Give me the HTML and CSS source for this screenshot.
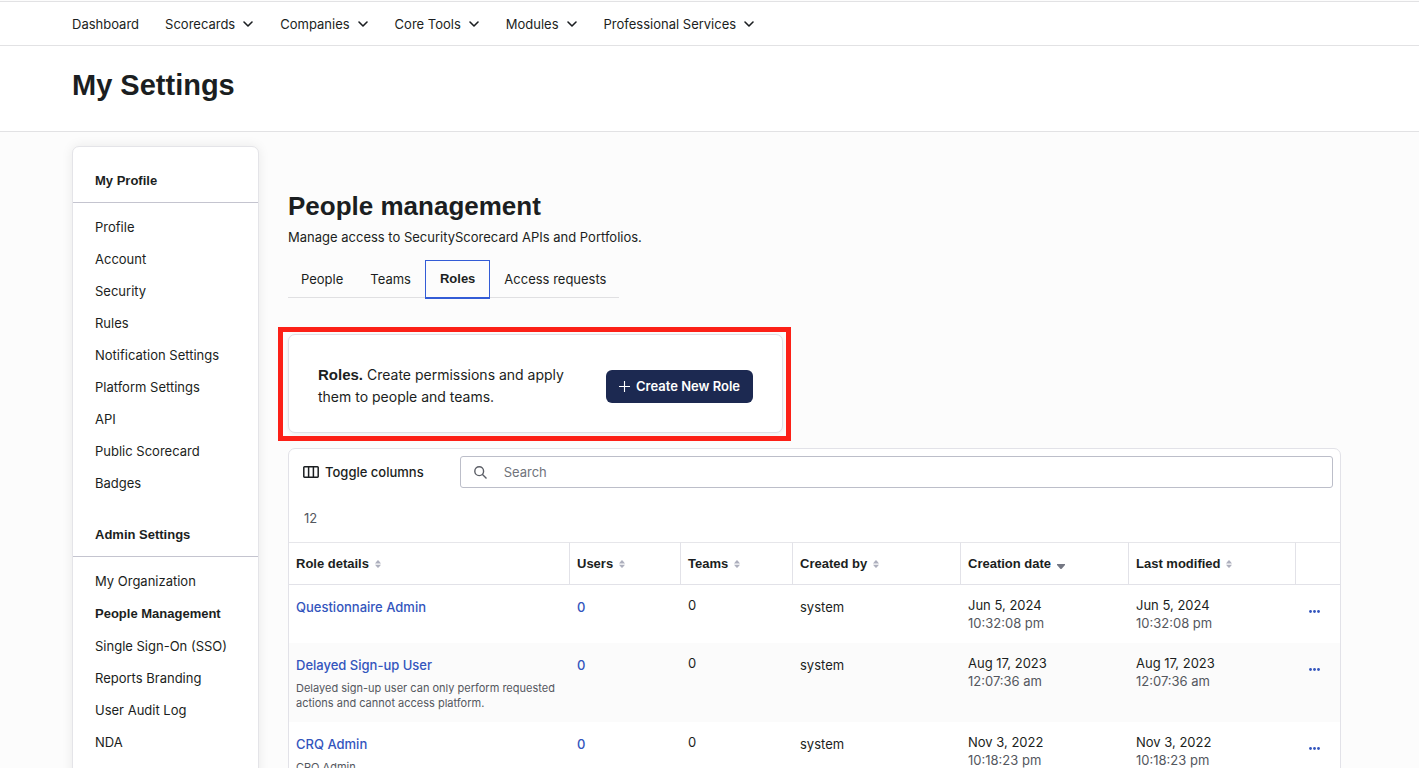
FILE: index.html
```html
<!DOCTYPE html>
<html lang="en">
<head>
    <meta charset="utf-8">
    <title>My Settings</title>
    <link rel="stylesheet" href="styles.css">
</head>
<body>
    <!-- shared icons -->
    <svg class="sprite" aria-hidden="true">
        <symbol id="chevron" viewBox="0 0 12 8"><path d="M2 2l4 4 4-4" fill="none" stroke="currentColor" stroke-width="1.6" stroke-linecap="round" stroke-linejoin="round"/></symbol>
        <symbol id="sort" viewBox="0 0 6 8"><path d="M0 3.400L2.400.5Q3 0 3.600.5L6 3.400zM0 4.800h6L3.600 7.600Q3 8 2.400 7.600z" fill="currentColor"/></symbol>
        <symbol id="dots" viewBox="0 0 11 3"><circle cx="1.5" cy="1.5" r="1.4"/><circle cx="5.5" cy="1.5" r="1.4"/><circle cx="9.5" cy="1.5" r="1.4"/></symbol>
    </svg>

    <nav class="top-nav">
        <a href="#">Dashboard</a>
        <button>Scorecards <svg class="chevron"><use href="#chevron"/></svg></button>
        <button>Companies <svg class="chevron"><use href="#chevron"/></svg></button>
        <button>Core Tools <svg class="chevron"><use href="#chevron"/></svg></button>
        <button>Modules <svg class="chevron"><use href="#chevron"/></svg></button>
        <button>Professional Services <svg class="chevron"><use href="#chevron"/></svg></button>
    </nav>

    <header class="page-header">
        <h1>My Settings</h1>
    </header>

    <div class="content">
        <aside class="sidebar">
            <h3>My Profile</h3>
            <ul>
                <li><a href="#">Profile</a></li>
                <li><a href="#">Account</a></li>
                <li><a href="#">Security</a></li>
                <li><a href="#">Rules</a></li>
                <li><a href="#">Notification Settings</a></li>
                <li><a href="#">Platform Settings</a></li>
                <li><a href="#">API</a></li>
                <li><a href="#">Public Scorecard</a></li>
                <li><a href="#">Badges</a></li>
            </ul>
            <h3>Admin Settings</h3>
            <ul>
                <li><a href="#">My Organization</a></li>
                <li><a href="#" class="active">People Management</a></li>
                <li><a href="#">Single Sign-On (SSO)</a></li>
                <li><a href="#">Reports Branding</a></li>
                <li><a href="#">User Audit Log</a></li>
                <li><a href="#">NDA</a></li>
            </ul>
        </aside>

        <main>
            <h2>People management</h2>
            <p class="intro">Manage access to SecurityScorecard APIs and Portfolios.</p>

            <div class="tabs" role="tablist">
                <button role="tab">People</button>
                <button role="tab">Teams</button>
                <button role="tab" class="selected" aria-selected="true">Roles</button>
                <button role="tab">Access requests</button>
            </div>

            <section class="roles-card">
                <p><strong>Roles.</strong> Create permissions and apply them to people and teams.</p>
                <button class="create-button">
                    <svg class="plus" viewBox="0 0 11 11"><path d="M5.5 0v11M0 5.5h11" stroke="currentColor" stroke-width="1.1"/></svg>
                    Create New Role
                </button>
            </section>

            <section class="table-card">
                <div class="toolbar">
                    <button class="toggle-columns">
                        <svg class="columns" viewBox="0 0 16 12"><path d="M1.5.8h13a.7.7 0 0 1 .7.7v9a.7.7 0 0 1-.7.7h-13a.7.7 0 0 1-.7-.7v-9a.7.7 0 0 1 .7-.7zM5.6 1v10M10.4 1v10" fill="none" stroke="currentColor" stroke-width="1.5"/></svg>
                        Toggle columns
                    </button>
                    <label class="search">
                        <svg viewBox="0 0 13 13"><path d="M9.6 5.2a4.4 4.4 0 1 1-8.8 0 4.4 4.4 0 0 1 8.8 0zM8.5 8.5l4 4" fill="none" stroke="currentColor" stroke-width="1.4"/></svg>
                        <input type="text" placeholder="Search" aria-label="Search">
                    </label>
                </div>
                <p class="count">12</p>

                <table>
                    <colgroup>
                        <col>
                        <col class="col-users">
                        <col class="col-teams">
                        <col class="col-wide">
                        <col class="col-wide">
                        <col class="col-modified">
                        <col class="col-menu">
                    </colgroup>
                    <thead>
                        <tr>
                            <th>Role details <svg class="sort"><use href="#sort"/></svg></th>
                            <th>Users <svg class="sort"><use href="#sort"/></svg></th>
                            <th>Teams <svg class="sort"><use href="#sort"/></svg></th>
                            <th>Created by <svg class="sort"><use href="#sort"/></svg></th>
                            <th>Creation date <svg class="sorted" viewBox="0 0 8 5"><path d="M0 0h8v1L4.700 4.700Q4 5.200 3.300 4.700L0 1z" fill="currentColor"/></svg></th>
                            <th>Last modified <svg class="sort"><use href="#sort"/></svg></th>
                            <th></th>
                        </tr>
                    </thead>
                    <tbody>
                        <tr>
                            <td><a href="#">Questionnaire Admin</a></td>
                            <td><a href="#">0</a></td>
                            <td>0</td>
                            <td class="creator">system</td>
                            <td>Jun 5, 2024<span class="time">10:32:08 pm</span></td>
                            <td>Jun 5, 2024<span class="time">10:32:08 pm</span></td>
                            <td><button class="menu" aria-label="More actions"><svg><use href="#dots"/></svg></button></td>
                        </tr>
                        <tr>
                            <td><a href="#">Delayed Sign-up User</a><p class="description">Delayed sign-up user can only perform requested actions and cannot access platform.</p></td>
                            <td><a href="#">0</a></td>
                            <td>0</td>
                            <td class="creator">system</td>
                            <td>Aug 17, 2023<span class="time">12:07:36 am</span></td>
                            <td>Aug 17, 2023<span class="time">12:07:36 am</span></td>
                            <td><button class="menu" aria-label="More actions"><svg><use href="#dots"/></svg></button></td>
                        </tr>
                        <tr>
                            <td><a href="#">CRQ Admin</a><p class="description">CRQ Admin</p></td>
                            <td><a href="#">0</a></td>
                            <td>0</td>
                            <td class="creator">system</td>
                            <td>Nov 3, 2022<span class="time">10:18:23 pm</span></td>
                            <td>Nov 3, 2022<span class="time">10:18:23 pm</span></td>
                            <td><button class="menu" aria-label="More actions"><svg><use href="#dots"/></svg></button></td>
                        </tr>
                    </tbody>
                </table>
            </section>
        </main>
    </div>
</body>
</html>
```
FILE: styles.css
```css
* {
    box-sizing: border-box;
}

body {
    margin: 0;
    padding-top: 1px;
    height: 100vh;
    overflow: hidden;
    background-color: #fcfcfc;
    color: #1b1e21;
    font-family: Inter, sans-serif;
    font-size: 13px;
    line-height: 18px;
}

h1, h2, h3, p, ul {
    margin: 0;
    padding: 0;
}

h1, h2, h3, th, strong {
    font-family: "Liberation Sans", Arial, sans-serif;
    font-weight: bold;
}

button {
    padding: 0;
    border: none;
    background: none;
    color: inherit;
    font: inherit;
    cursor: pointer;
}

a {
    color: inherit;
    text-decoration: none;
}

svg {
    flex: none;
}

.sprite {
    display: none;
}

.top-nav {
    display: flex;
    align-items: center;
    gap: 26px;
    height: 45px;
    padding: 0 72px;
    background-color: #fff;
    border-top: 1px solid #e2e2e4;
    border-bottom: 1px solid #e2e2e4;
}

.top-nav button {
    display: flex;
    align-items: center;
    gap: 7px;
}

.chevron {
    width: 12px;
    height: 8px;
}

.page-header {
    padding: 22px 72px 29px;
    background-color: #fff;
    border-bottom: 1px solid #e2e2e4;
}

h1 {
    font-size: 29px;
    line-height: 34px;
}

.content {
    display: flex;
    align-items: flex-start;
    gap: 29px;
    padding: 14px 78px 0 72px;
}

.sidebar {
    flex: none;
    width: 187px;
    padding: 15px 0 48px;
    background-color: #fff;
    border: 1px solid #e4e4e8;
    border-radius: 7px;
    box-shadow: 0 0 12px rgba(0, 0, 0, 0.08);
}

h3 {
    padding: 10px 22px 12px;
    border-bottom: 1px solid #c4c4cf;
    font-size: 13px;
    line-height: 18px;
}

.sidebar ul {
    list-style: none;
    padding: 8px 22px 17px;
}

.sidebar li {
    line-height: 32px;
}

.sidebar .active {
    font-family: "Liberation Sans", Arial, sans-serif;
    font-weight: bold;
}

main {
    flex: 1;
    min-width: 0;
    padding-top: 44px;
}

h2 {
    font-size: 26px;
    line-height: 32px;
}

.intro {
    padding: 6px 0 14px;
}

.tabs {
    display: flex;
    width: fit-content;
    gap: 1px;
    border-bottom: 1px solid #e0e0e2;
}

.tabs button {
    height: 37px;
    padding: 0 12px;
    border: 1px solid transparent;
}

.tabs .selected {
    margin-bottom: -2px;
    height: 39px;
    padding: 0 14px;
    border-color: #335cd6;
    border-bottom-width: 2px;
    font-family: "Liberation Sans", Arial, sans-serif;
    font-weight: bold;
}

.roles-card {
    position: relative;
    display: flex;
    align-items: center;
    justify-content: space-between;
    width: 495px;
    margin-top: 36px;
    padding: 29px 29px 24px;
    background-color: #fff;
    border: 1px solid #e0e0e6;
    border-radius: 7px;
    box-shadow: 0 1px 4px rgba(0, 0, 0, 0.06);
}

/* red callout around the card */
.roles-card::after {
    content: "";
    position: absolute;
    inset: -8px -9px -9px -11px;
    border: 5px solid #fc2017;
    pointer-events: none;
}

.roles-card p {
    width: 264px;
    font-size: 14px;
    line-height: 22px;
}

.roles-card strong {
    font-size: 15px;
}

.create-button {
    display: flex;
    align-items: center;
    gap: 6px;
    height: 33px;
    padding: 0 13px;
    background-color: #1c2951;
    border-radius: 6px;
    color: #fff;
    font-weight: 600;
}

.plus {
    width: 11px;
    height: 11px;
}

.table-card {
    margin-top: 15px;
    background-color: #fff;
    border: 1px solid #e2e2e8;
    border-radius: 7px;
}

.toolbar {
    display: flex;
    align-items: center;
    gap: 36px;
    padding: 7px 7px 0 14px;
}

.toggle-columns {
    display: flex;
    align-items: center;
    gap: 6px;
    font-weight: 500;
}

.columns {
    width: 16px;
    height: 12px;
}

.search {
    display: flex;
    flex: 1;
    align-items: center;
    gap: 17px;
    height: 32px;
    padding: 0 13px;
    border: 1px solid #bcbec9;
    border-radius: 3px;
    color: #5b5e66;
}

.search svg {
    width: 13px;
    height: 13px;
}

.search input {
    flex: 1;
    padding: 0;
    border: none;
    outline: none;
    background: none;
    font: inherit;
}

.search input::placeholder {
    color: #70737b;
}

.count {
    padding: 21px 15px 15px;
    color: #54575e;
}

table {
    width: 100%;
    table-layout: fixed;
    border-collapse: separate;
    border-spacing: 0;
}

.col-users {
    width: 111px;
}

.col-teams {
    width: 112px;
}

.col-wide {
    width: 168px;
}

.col-modified {
    width: 167px;
}

.col-menu {
    width: 44px;
}

th {
    height: 43px;
    padding: 0 7px;
    border-top: 1px solid #e6e6ea;
    border-right: 1px solid #e2e2e8;
    border-bottom: 1px solid #e2e2e8;
    text-align: left;
}

th:last-child {
    border-right: none;
}

.sort {
    width: 6px;
    height: 8px;
    margin-left: 2px;
    color: #adafbd;
}

.sorted {
    width: 8px;
    height: 5px;
    margin-left: 2px;
    vertical-align: -1px;
    color: #747783;
}

td {
    padding: 11px 7px;
    vertical-align: top;
}

tbody tr:nth-child(even) {
    background-color: #fbfbfb;
}

td a {
    display: block;
    line-height: 22px;
    color: #3355bd;
    font-weight: 500;
}

.creator {
    line-height: 22px;
}

.description {
    margin-top: 5px;
    font-size: 11px;
    line-height: 15px;
    color: #54575e;
}

.time {
    display: block;
    color: #54575e;
}

.menu {
    display: flex;
    align-items: center;
    height: 30px;
    padding-left: 6px;
    color: #3355bd;
}

.menu svg {
    width: 11px;
    height: 3px;
    fill: currentColor;
}
```
